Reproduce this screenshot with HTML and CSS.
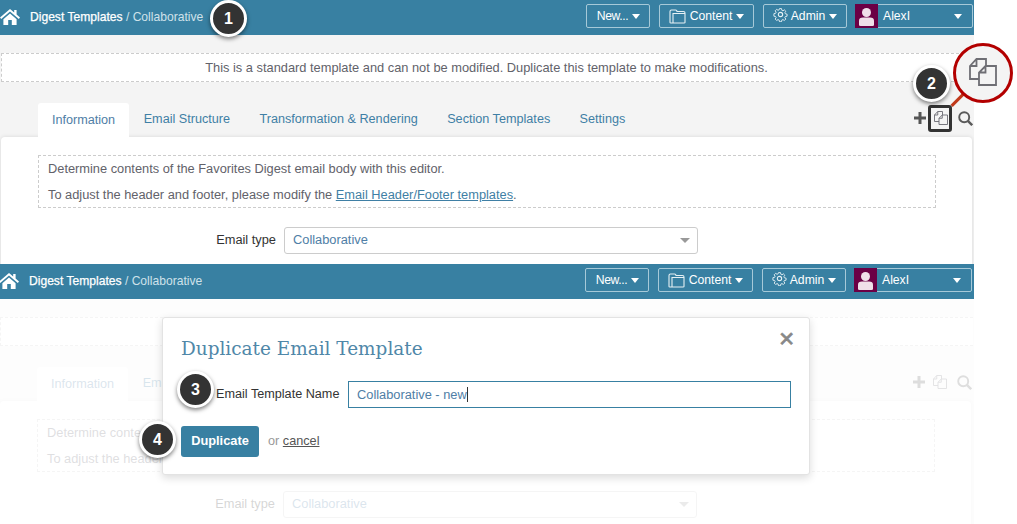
FILE: index.html
```html
<!DOCTYPE html>
<html lang="en">
<head>
<meta charset="utf-8">
<title>Duplicate Email Template</title>
<link rel="stylesheet" href="styles.css">
</head>
<body>
<svg class="defs" width="0" height="0" aria-hidden="true">
  <defs>
    <symbol id="i-home" viewBox="0 0 20 18"><path d="M10 1 0 9.600l1.200 1.400L10 3.400 18.800 11l1.200-1.400-3.400-3V2h-2.400v2.500z" fill="currentColor"/><path d="M3.400 11.200 10 5.500l6.600 5.700V17h-4.800v-5H8.200v5H3.400z" fill="currentColor"/></symbol>
    <symbol id="i-folder" viewBox="0 0 17 15"><path d="M1 13.500V2.500Q1 1 2.500 1h4Q8 1 8 2.500h6.500Q16 2.500 16 4v9.500Q16 14 15 14H2Q1 14 1 13.500zM4 14V4.500h12" fill="none" stroke="currentColor" stroke-width="1.100"/></symbol>
    <symbol id="i-gear" viewBox="0 0 16 16"><circle cx="8" cy="8" r="2.300" fill="none" stroke="currentColor" stroke-width="1.200"/><path d="M6.800 1h2.400l.4 2 1.300.6 1.700-1.100 1.700 1.700-1.100 1.700.6 1.300 2 .4v2.400l-2 .4-.6 1.300 1.100 1.700-1.700 1.700-1.700-1.100-1.300.6-.4 2H6.800l-.4-2-1.300-.6-1.700 1.100-1.700-1.700 1.100-1.700-.6-1.300-2-.4V7.000l2-.4.6-1.300-1.100-1.700 1.700-1.700 1.700 1.100 1.300-.6z" fill="none" stroke="currentColor" stroke-width="1.100" transform="translate(.8 .8) scale(.9)"/></symbol>
    <symbol id="i-user" viewBox="0 0 23 23"><circle cx="11.500" cy="7.500" r="4.500" fill="currentColor"/><path d="M4 20v-4.500Q4 12.500 8 12.500h7q4 0 4 3V20q0 1-1.500 1h-12Q4 21 4 20z" fill="currentColor"/></symbol>
    <symbol id="i-copy" viewBox="0 0 28 28"><path d="M10 21H1V8L7.500 1h9.500v7M7.500 1v7H1" fill="none" stroke="currentColor" stroke-width="1.800"/><path d="M10 27V14.500L16.500 8H27v19zM16.500 8v6.500H10" fill="none" stroke="currentColor" stroke-width="1.800"/></symbol>
    <symbol id="i-plus" viewBox="0 0 12 12"><path d="M4.500 0h3v4.500H12v3H7.500V12h-3V7.500H0v-3h4.500z" fill="currentColor"/></symbol>
    <symbol id="i-search" viewBox="0 0 15 15"><circle cx="6.200" cy="6.200" r="5" fill="none" stroke="currentColor" stroke-width="1.900"/><path d="m9.800 9.800 4.400 4.400" stroke="currentColor" stroke-width="2.400" fill="none"/></symbol>
  </defs>
</svg>

<section class="shot">
  <header class="topbar">
    <div class="crumbs">
      <svg class="ico-home"><use href="#i-home"/></svg>
      <span class="crumb-main">Digest Templates</span><span class="crumb-sub">&nbsp;/ Collaborative</span>
    </div>
    <nav class="nav">
      <a class="nav-btn nav-new">New... <i class="caret"></i></a>
      <a class="nav-btn nav-content"><svg class="ico-folder"><use href="#i-folder"/></svg>Content <i class="caret"></i></a>
      <a class="nav-btn nav-admin"><svg class="ico-gear"><use href="#i-gear"/></svg>Admin <i class="caret"></i></a>
      <a class="nav-user"><span class="avatar"><svg class="ico-user"><use href="#i-user"/></svg></span><span class="user-name">AlexI</span><i class="caret"></i></a>
    </nav>
  </header>
  <div class="content">
    <p class="notice">This is a standard template and can not be modified. Duplicate this template to make modifications.</p>
    <div class="tabrow">
      <a class="tab tab-active">Information</a>
      <a class="tab">Email Structure</a>
      <a class="tab">Transformation &amp; Rendering</a>
      <a class="tab">Section Templates</a>
      <a class="tab">Settings</a>
      <div class="tools">
        <svg class="ico-plus"><use href="#i-plus"/></svg>
        <svg class="ico-copy"><use href="#i-copy"/></svg>
        <svg class="ico-search"><use href="#i-search"/></svg>
      </div>
    </div>
    <div class="card">
      <div class="info">
        <p>Determine contents of the Favorites Digest email body with this editor.</p>
        <p>To adjust the header and footer, please modify the <a class="info-link">Email Header/Footer templates</a>.</p>
      </div>
      <div class="field">
        <span class="field-label">Email type</span>
        <div class="select">Collaborative<i class="select-caret"></i></div>
      </div>
    </div>
  </div>
</section>

<section class="shot shot-second">
  <header class="topbar">
    <div class="crumbs">
      <svg class="ico-home"><use href="#i-home"/></svg>
      <span class="crumb-main">Digest Templates</span><span class="crumb-sub">&nbsp;/ Collaborative</span>
    </div>
    <nav class="nav">
      <a class="nav-btn nav-new">New... <i class="caret"></i></a>
      <a class="nav-btn nav-content"><svg class="ico-folder"><use href="#i-folder"/></svg>Content <i class="caret"></i></a>
      <a class="nav-btn nav-admin"><svg class="ico-gear"><use href="#i-gear"/></svg>Admin <i class="caret"></i></a>
      <a class="nav-user"><span class="avatar"><svg class="ico-user"><use href="#i-user"/></svg></span><span class="user-name">AlexI</span><i class="caret"></i></a>
    </nav>
  </header>
  <div class="content content-dimmed">
    <p class="notice">&nbsp;</p>
    <div class="tabrow">
      <a class="tab tab-active">Information</a>
      <a class="tab">Email Structure</a>
      <a class="tab">Transformation &amp; Rendering</a>
      <a class="tab">Section Templates</a>
      <a class="tab">Settings</a>
      <div class="tools">
        <svg class="ico-plus"><use href="#i-plus"/></svg>
        <svg class="ico-copy"><use href="#i-copy"/></svg>
        <svg class="ico-search"><use href="#i-search"/></svg>
      </div>
    </div>
    <div class="card">
      <div class="info">
        <p>Determine contents of the Favorites Digest email body with this editor.</p>
        <p>To adjust the header and footer, please modify the <a class="info-link">Email Header/Footer templates</a>.</p>
      </div>
      <div class="field">
        <span class="field-label">Email type</span>
        <div class="select">Collaborative<i class="select-caret"></i></div>
      </div>
    </div>
  </div>
  <div class="modal">
    <button class="modal-close" aria-label="Close">&#10005;</button>
    <h2 class="modal-title">Duplicate Email Template</h2>
    <div class="modal-row">
      <label class="modal-label">Email Template Name</label>
      <div class="modal-input">Collaborative - new<i class="cursor"></i></div>
    </div>
    <div class="modal-actions">
      <a class="btn-primary">Duplicate</a>
      <span class="or">or <a class="cancel">cancel</a></span>
    </div>
  </div>
</section>

<div class="highlight"></div>
<div class="connector"></div>
<div class="lens"><svg class="ico-lens"><use href="#i-copy"/></svg></div>
<div class="step step-1">1</div>
<div class="step step-2">2</div>
<div class="step step-3">3</div>
<div class="step step-4">4</div>
</body>
</html>
```

FILE: styles.css
```css
* { box-sizing: border-box; }
html, body { margin: 0; padding: 0; }
body {
  position: relative;
  width: 1017px;
  height: 524px;
  overflow: hidden;
  background: #fff;
  font-family: "Liberation Sans", Arial, sans-serif;
  font-size: 14px;
  color: #62626a;
}
.defs { position: absolute; }
.shot { width: 974px; height: 264px; overflow: hidden; position: relative; }
.shot-second { width: 975px; height: 260px; margin-left: -1px; }

.topbar {
  height: 35px;
  background: #3880a2;
  display: flex;
  justify-content: space-between;
  padding: 4px 1px 0 0;
  color: #fff;
}
.shot-second .topbar { padding-right: 2px; }
.crumbs { display: flex; align-items: center; height: 25px; font-size: 12.100px; }
.ico-home { width: 20px; height: 18px; margin-right: 10px; color: #fff; }
.crumb-main { -webkit-text-stroke: .25px #fff; }
.crumb-sub { color: #cfe2ea; }

.nav { display: flex; gap: 9px; font-size: 12.200px; }
.nav-btn, .nav-user {
  height: 24px;
  border: 1px solid #a6c9d8;
  border-radius: 2px;
  display: flex;
  align-items: center;
  justify-content: center;
  color: #fff;
}
.nav-new { width: 64px; padding-left: 1px; letter-spacing: -.4px; }
.nav-content { width: 95px; }
.nav-admin { width: 84px; }
.nav-user { width: 118px; justify-content: flex-start; margin-left: -1px; }
.caret {
  display: inline-block;
  width: 0;
  height: 0;
  margin-left: 4px;
  border-left: 4px solid transparent;
  border-right: 4px solid transparent;
  border-top: 5px solid #fff;
}
.ico-folder { width: 17px; height: 15px; margin-right: 4px; color: #e6f0f4; }
.ico-gear { width: 15px; height: 15px; margin: -3px 3px 0 0; color: #e6f0f4; }
.avatar {
  width: 23px;
  height: 24px;
  margin-left: -1px;
  background: #6b0045;
  display: flex;
  align-items: center;
  justify-content: center;
}
.ico-user { width: 23px; height: 23px; color: #f0dfe9; }
.user-name { flex: 1; padding-left: 5px; }
.nav-user .caret { margin-right: 10px; }

.content { height: 229px; background: #f4f4f4; padding-top: 18px; }
.shot-second .content { padding-right: 1px; }
.notice {
  margin: 0 0 0 1px;
  height: 29px;
  line-height: 28px;
  padding-right: 3px;
  background: #fff;
  border: 1px dashed #ccc;
  border-right: 0;
  text-align: center;
  font-size: 12.830px;
}
.tabrow { display: flex; height: 34px; margin-top: 21px; padding-left: 38px; position: relative; }
.tab {
  height: 34px;
  line-height: 32px;
  padding: 0 14.700px;
  font-size: 12.650px;
  color: #3f7fa5;
}
.tab-active {
  width: 91px;
  padding: 1px 0 0;
  text-align: center;
  background: #fff;
  border-radius: 3px 3px 0 0;
  color: #4f7ea6;
  position: relative;
  z-index: 1;
}
.tools { margin-left: auto; display: flex; align-items: center; gap: 7px; height: 30px; padding-right: 1px; color: #555; }
.ico-plus { width: 12px; height: 12px; color: #555; }
.ico-copy { width: 14px; height: 14px; margin: 0 3px 0 1px; color: #6a6a72; }
.ico-search { width: 15px; height: 15px; color: #5a5a5a; }

.card {
  margin-left: 1px;
  width: 971px;
  height: 140px;
  background: #fff;
  border-radius: 4px 4px 0 0;
  box-shadow: 0 0 4px rgba(0, 0, 0, .12);
  padding: 18px 0 0 37px;
}
.info {
  width: 898px;
  height: 53px;
  border: 1px dashed #ccc;
  padding: 0 9px;
  font-size: 12.820px;
  line-height: 26px;
}
.info p { margin: 0; }
.info-link { color: #3f7fa5; text-decoration: underline; }
.field { display: flex; align-items: center; margin: 19px 0 0 177px; height: 27px; }
.field-label { width: 61px; padding-bottom: 2px; text-align: right; font-size: 12.820px; color: #333; margin-right: 8px; white-space: nowrap; }
.select {
  position: relative;
  width: 414px;
  height: 27px;
  line-height: 23px;
  padding-left: 8px;
  border: 1px solid #ccc;
  border-radius: 3px;
  background: #fff;
  font-size: 12.820px;
  color: #4f7ea6;
}
.select-caret {
  position: absolute;
  right: 7px;
  top: 10px;
  border-left: 5px solid transparent;
  border-right: 5px solid transparent;
  border-top: 5px solid #999;
}

.content-dimmed { position: relative; }
.content-dimmed::after {
  content: "";
  position: absolute;
  inset: 0;
  background: rgba(255, 255, 255, .8);
  z-index: 2;
}

.modal {
  position: absolute;
  left: 163px;
  top: 53px;
  width: 648px;
  height: 158px;
  background: #fff;
  border: 1px solid #e3e3e3;
  border-radius: 3px;
  box-shadow: 0 3px 8px rgba(0, 0, 0, .14);
  padding: 17px 18px 0;
  z-index: 3;
}
.modal-close {
  position: absolute;
  right: 14px;
  top: 10px;
  padding: 0;
  border: 0;
  background: none;
  font-size: 20px;
  font-weight: 700;
  line-height: 22px;
  color: #888;
  -webkit-text-stroke: .7px #888;
  font-family: "DejaVu Sans", sans-serif;
}
.modal-title {
  margin: 0;
  font-family: "DejaVu Serif", serif;
  font-size: 18.450px;
  font-weight: 400;
  line-height: 28px;
  color: #4f87a8;
}
.modal-row { display: flex; align-items: center; margin-top: 18px; height: 27px; }
.modal-label { width: 158px; padding: 0 0 2px 35px; font-size: 12.650px; color: #333; white-space: nowrap; margin-right: 9px; }
.modal-input {
  width: 443px;
  height: 27px;
  line-height: 25px;
  padding-left: 8px;
  border: 1px solid #3880a2;
  font-size: 12.820px;
  color: #4f7ea6;
}
.cursor { display: inline-block; width: 1px; height: 15px; background: #333; vertical-align: -3px; }
.modal-actions { display: flex; align-items: center; margin-top: 18px; }
.btn-primary {
  width: 78px;
  height: 31px;
  line-height: 30px;
  background: #3880a2;
  border-radius: 3px;
  text-align: center;
  color: #fff;
  font-size: 12.820px;
  font-weight: 700;
}
.or { margin: -2px 0 0 9px; font-size: 12.700px; color: #999; }
.cancel { color: #555; text-decoration: underline; }

.step {
  position: absolute;
  width: 37px;
  height: 37px;
  line-height: 32px;
  text-align: center;
  border: 3px solid #fff;
  border-radius: 50%;
  background: #333;
  color: #fff;
  font-weight: 700;
  font-size: 16px;
  box-shadow: 0 2px 4px rgba(0, 0, 0, .5);
  z-index: 6;
}
.step-1 { left: 210px; top: 0; }
.step-2 { left: 913px; top: 65px; }
.step-3 { left: 177px; top: 371px; }
.step-4 { left: 139px; top: 421px; }

.highlight {
  position: absolute;
  left: 928px;
  top: 105px;
  width: 24px;
  height: 27px;
  border: 3px solid #333;
  border-radius: 3px;
  z-index: 5;
}
.connector {
  position: absolute;
  left: 949px;
  top: 98px;
  width: 18px;
  height: 3px;
  background: #c0391b;
  transform: rotate(-45deg);
  z-index: 4;
}
.lens {
  position: absolute;
  left: 953px;
  top: 43px;
  width: 60px;
  height: 60px;
  padding-bottom: 2px;
  border: 3px solid #b30000;
  border-radius: 50%;
  background: #f4f4f4;
  display: flex;
  align-items: center;
  justify-content: center;
  z-index: 5;
}
.ico-lens { width: 28px; height: 28px; color: #6e6e74; }
```
